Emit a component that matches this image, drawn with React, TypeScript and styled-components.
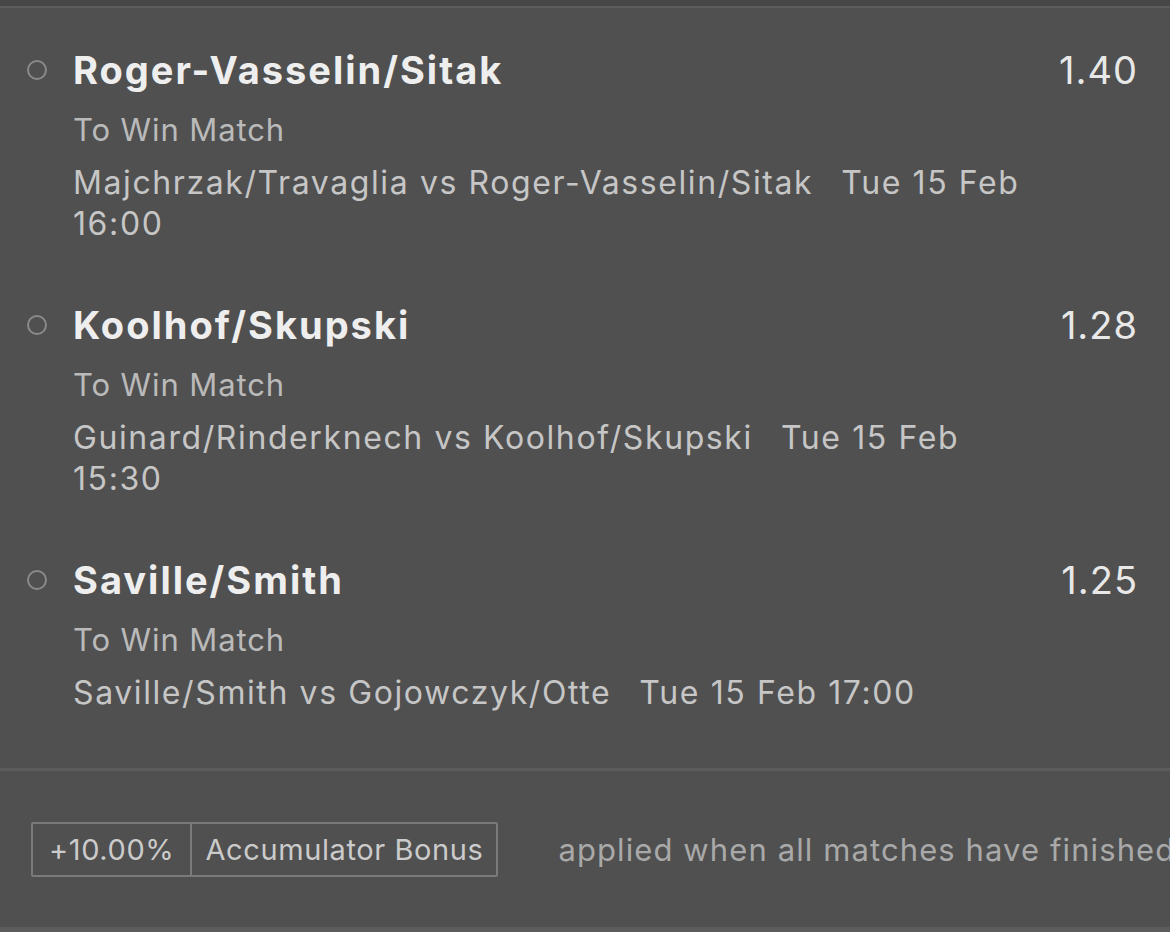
import React from 'react';
import styled, { createGlobalStyle } from 'styled-components';

const GlobalStyle = createGlobalStyle`
  html, body {
    margin: 0;
    padding: 0;
    background: #505050;
    overflow: hidden;
  }
  body {
    font-family: Inter, "Noto Sans", sans-serif;
    -webkit-font-smoothing: antialiased;
  }
`;

const Page = styled.div`
  display: flex;
  flex-direction: column;
  width: 1170px;
  height: 932px;
  background: #505050;
  overflow: hidden;
`;

const TopStrip = styled.div`
  height: 6px;
  background: #474747;
  border-bottom: 2px solid #5c5c5c;
`;

const SelectionList = styled.section`
  display: flex;
  flex-direction: column;
  gap: 59px;
  padding: 40px 32px 55px 0;
`;

const Selection = styled.div`
  display: grid;
  grid-template-columns: 73px 1fr auto;
  align-items: start;
`;

const RadioCell = styled.div`
  display: flex;
  align-items: center;
  height: 44px;
  padding-left: 27px;
`;

const Radio = styled.span`
  box-sizing: border-box;
  width: 20px;
  height: 20px;
  border: 2px solid #8a8a8a;
  border-radius: 50%;
`;

const Body = styled.div`
  display: flex;
  flex-direction: column;
  max-width: 975px;
`;

const Title = styled.div`
  font-size: 38px;
  line-height: 44px;
  font-weight: 700;
  letter-spacing: 2px;
  color: #eeeeee;
`;

const Market = styled.div`
  margin-top: 17px;
  font-size: 31px;
  line-height: 41px;
  letter-spacing: 0.9px;
  color: #bababa;
`;

const Fixture = styled.div`
  margin-top: 12px;
  font-size: 32px;
  line-height: 41px;
  letter-spacing: 1.6px;
  color: #c6c6c6;
`;

const KickOff = styled.span`
  margin-left: 28px;
`;

const Odds = styled.div`
  font-size: 38px;
  line-height: 44px;
  font-weight: 400;
  letter-spacing: 1px;
  color: #e8e8e8;
`;

const Footer = styled.footer`
  display: flex;
  align-items: center;
  height: 156px;
  border-top: 3px solid #5c5c5c;
  border-bottom: 5px solid #5c5c5c;
  padding-left: 31px;
  white-space: nowrap;
`;

const BonusTag = styled.div`
  display: flex;
  flex-shrink: 0;
  height: 55px;
  box-sizing: border-box;
  border: 2px solid #7a7a7a;
  border-radius: 2px;
`;

const TagCell = styled.span<{ $divided?: boolean }>`
  display: flex;
  align-items: center;
  padding: ${(p) => (p.$divided ? '0 13px 0 13px' : '0 16px 0 16px')};
  font-size: 29px;
  letter-spacing: 0.6px;
  color: #cbcbcb;
  border-left: ${(p) => (p.$divided ? '2px solid #7a7a7a' : 'none')};
`;

const BonusNote = styled.span`
  margin-left: 60px;
  font-size: 31px;
  letter-spacing: 1.1px;
  color: #a9a9a9;
`;

type Pick = {
  name: string;
  odds: string;
  fixture: string;
  kickOff: string;
};

const picks: Pick[] = [
  {
    name: 'Roger-Vasselin/Sitak',
    odds: '1.40',
    fixture: 'Majchrzak/Travaglia vs Roger-Vasselin/Sitak',
    kickOff: 'Tue 15 Feb 16:00',
  },
  {
    name: 'Koolhof/Skupski',
    odds: '1.28',
    fixture: 'Guinard/Rinderknech vs Koolhof/Skupski',
    kickOff: 'Tue 15 Feb 15:30',
  },
  {
    name: 'Saville/Smith',
    odds: '1.25',
    fixture: 'Saville/Smith vs Gojowczyk/Otte',
    kickOff: 'Tue 15 Feb 17:00',
  },
];

export default function App() {
  return (
    <Page>
      <GlobalStyle />
      <TopStrip />
      <SelectionList>
        {picks.map((p) => (
          <Selection key={p.name}>
            <RadioCell>
              <Radio />
            </RadioCell>
            <Body>
              <Title>{p.name}</Title>
              <Market>To Win Match</Market>
              <Fixture>
                {p.fixture}
                <KickOff>{p.kickOff}</KickOff>
              </Fixture>
            </Body>
            <Odds>{p.odds}</Odds>
          </Selection>
        ))}
      </SelectionList>
      <Footer>
        <BonusTag>
          <TagCell>+10.00%</TagCell>
          <TagCell $divided>Accumulator Bonus</TagCell>
        </BonusTag>
        <BonusNote>applied when all matches have finished</BonusNote>
      </Footer>
    </Page>
  );
}
